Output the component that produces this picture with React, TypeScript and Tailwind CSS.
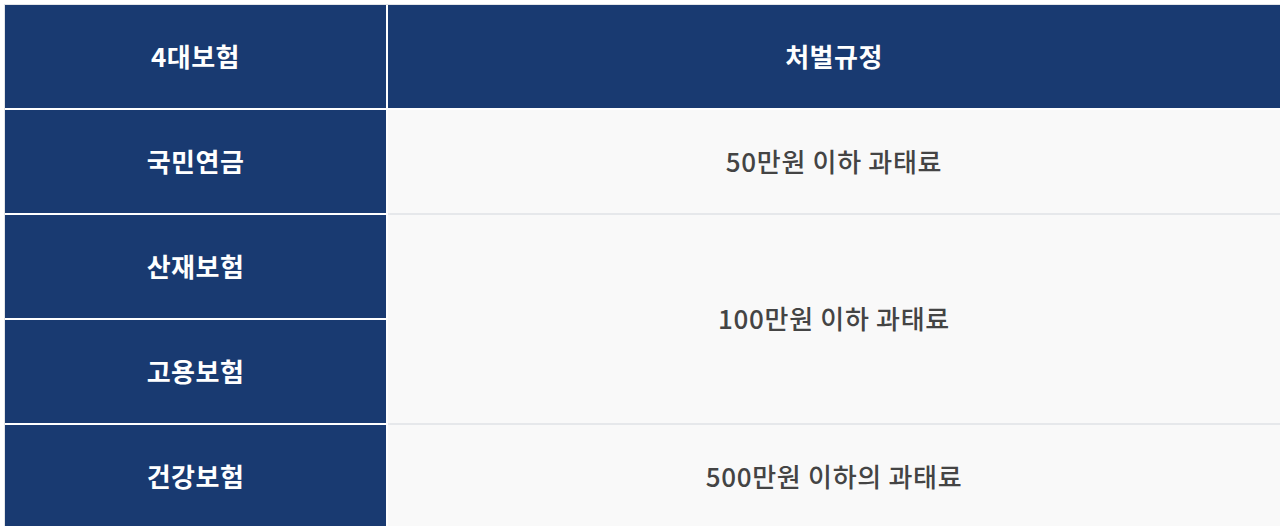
// 4대보험 처벌규정 table

const font = '[font-family:"Noto_Sans_CJK_KR","Noto_Sans",sans-serif]'

const leftCell = `flex h-[103px] items-center justify-center bg-[#193a71] pb-[3px] text-[26px] font-bold tracking-[0.5px] text-white ${font}`
const rightCell = `flex items-center justify-center bg-[#f9f9f9] pb-[3px] text-[26px] font-medium tracking-[0.7px] text-[#444444] ${font}`

export default function App() {
  return (
    <div className="h-[526px] w-[1280px] overflow-hidden bg-white pl-[4px] pt-[4px]">
      <div className="flex gap-[2px] border-l border-t border-[#e3e5e8]">
        {/* Left column: insurance names */}
        <div className="flex w-[381px] flex-col gap-[2px]">
          <div className={leftCell}>4대보험</div>
          <div className={leftCell}>국민연금</div>
          <div className={leftCell}>산재보험</div>
          <div className={leftCell}>고용보험</div>
          <div className={leftCell}>건강보험</div>
        </div>

        {/* Right column: penalties */}
        <div className="flex flex-1 flex-col">
          <div className={leftCell}>처벌규정</div>
          <div className="h-[2px] bg-white" />
          <div className={`${rightCell} h-[103px]`}>50만원 이하 과태료</div>
          <div className="h-[2px] bg-[#e6e8eb]" />
          <div className={`${rightCell} h-[208px]`}>100만원 이하 과태료</div>
          <div className="h-[2px] bg-[#e6e8eb]" />
          <div className={`${rightCell} h-[103px]`}>500만원 이하의 과태료</div>
        </div>
      </div>
    </div>
  )
}
